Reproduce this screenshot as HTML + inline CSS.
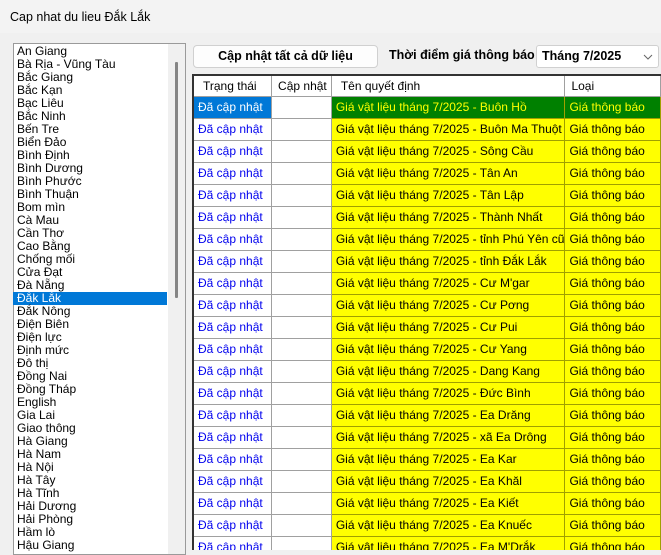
<!DOCTYPE html>
<html><head><meta charset="utf-8"><style>
*{margin:0;padding:0;box-sizing:border-box}
body{width:661px;height:553px;overflow:hidden;background:#f0f0f0;font-family:"Liberation Sans",sans-serif;font-size:12px;position:relative;color:#000}
.abs{position:absolute}
#title{left:0;top:0;width:661px;height:33px;background:#f3f3f3;}
#title span{position:absolute;left:10px;top:10px;font-size:12.5px}
#list{left:13px;top:43px;width:173px;height:512px;background:#fff;border:1px solid #9a9a9a;}
#list .it{position:absolute;left:4px;height:13px;line-height:13px;white-space:nowrap}
#sel{left:13px;top:292px;width:154px;height:13px;background:#0078d7}
#sb{left:168px;top:44px;width:17px;height:510px;background:#f0f0f0}
#thumb{left:175px;top:62px;width:3px;height:236px;background:#858585;border-radius:1px}
#btn{left:193px;top:45px;width:185px;height:23px;background:#fdfdfd;border:1px solid #d0d0d0;border-radius:4px;font-weight:bold;text-align:center;line-height:21px;font-size:12.5px}
#lbl{left:389px;top:48px;font-weight:bold;font-size:12.5px}
#combo{left:536px;top:45px;width:123px;height:23px;background:#fff;border:1px solid #d0d0d0;border-radius:3px;font-weight:bold;font-size:12.5px;line-height:21px;padding-left:5px}
#grid{left:192px;top:74px;width:469px;height:476px;background:#fff;border-left:2px solid #333;border-top:2px solid #333;overflow:hidden}
table{border-collapse:collapse;table-layout:fixed;position:absolute;left:0;top:0}
td{height:22px;border-right:1px solid #a0a0a0;border-bottom:1px solid #a0a0a0;padding-left:4px;white-space:nowrap;overflow:hidden}
tr.h td{height:20px;padding-left:9px}
td.s{color:#0000ee}
td.y{background:#ffff00;border-right-color:#a0a000;border-bottom-color:#a0a000}
tr.g td.y{background:#008000;color:#ffff00}
tr.g td.s{background:#0078d7;color:#fff}
#bot{left:192px;top:550px;width:469px;height:3px;background:#f0f0f0}
</style></head><body>
<div id="title" class="abs"><span>Cap nhat du lieu Đắk Lắk</span></div>
<div id="list" class="abs"></div>
<div id="sel" class="abs"></div>
<div id="sb" class="abs"></div>
<div id="thumb" class="abs"></div>
<div id="items"></div>
<div id="btn" class="abs">Cập nhật tất cả dữ liệu</div>
<div id="lbl" class="abs">Thời điểm giá thông báo</div>
<div id="combo" class="abs">Tháng 7/2025<svg style="position:absolute;right:5px;top:8px" width="10" height="6"><path d="M1 1L5 5L9 1" fill="none" stroke="#666" stroke-width="1"/></svg></div>
<div id="grid" class="abs">
<table>
<colgroup><col style="width:80px"><col style="width:61px"><col style="width:231px"><col style="width:100px"></colgroup>
<tr class="h"><td>Trạng thái</td><td style="padding-left:6px">Cập nhật</td><td>Tên quyết định</td><td style="padding-left:6px">Loại</td></tr>
<tr class="g"><td class="s">Đã cập nhật</td><td></td><td class="y">Giá vật liệu tháng 7/2025 - Buôn Hồ</td><td class="y">Giá thông báo</td></tr>
<tr><td class="s">Đã cập nhật</td><td></td><td class="y">Giá vật liệu tháng 7/2025 - Buôn Ma Thuột</td><td class="y">Giá thông báo</td></tr>
<tr><td class="s">Đã cập nhật</td><td></td><td class="y">Giá vật liệu tháng 7/2025 - Sông Cầu</td><td class="y">Giá thông báo</td></tr>
<tr><td class="s">Đã cập nhật</td><td></td><td class="y">Giá vật liệu tháng 7/2025 - Tân An</td><td class="y">Giá thông báo</td></tr>
<tr><td class="s">Đã cập nhật</td><td></td><td class="y">Giá vật liệu tháng 7/2025 - Tân Lập</td><td class="y">Giá thông báo</td></tr>
<tr><td class="s">Đã cập nhật</td><td></td><td class="y">Giá vật liệu tháng 7/2025 - Thành Nhất</td><td class="y">Giá thông báo</td></tr>
<tr><td class="s">Đã cập nhật</td><td></td><td class="y">Giá vật liệu tháng 7/2025 - tỉnh Phú Yên cũ</td><td class="y">Giá thông báo</td></tr>
<tr><td class="s">Đã cập nhật</td><td></td><td class="y">Giá vật liệu tháng 7/2025 - tỉnh Đắk Lắk</td><td class="y">Giá thông báo</td></tr>
<tr><td class="s">Đã cập nhật</td><td></td><td class="y">Giá vật liệu tháng 7/2025 - Cư M'gar</td><td class="y">Giá thông báo</td></tr>
<tr><td class="s">Đã cập nhật</td><td></td><td class="y">Giá vật liệu tháng 7/2025 - Cư Pơng</td><td class="y">Giá thông báo</td></tr>
<tr><td class="s">Đã cập nhật</td><td></td><td class="y">Giá vật liệu tháng 7/2025 - Cư Pui</td><td class="y">Giá thông báo</td></tr>
<tr><td class="s">Đã cập nhật</td><td></td><td class="y">Giá vật liệu tháng 7/2025 - Cư Yang</td><td class="y">Giá thông báo</td></tr>
<tr><td class="s">Đã cập nhật</td><td></td><td class="y">Giá vật liệu tháng 7/2025 - Dang Kang</td><td class="y">Giá thông báo</td></tr>
<tr><td class="s">Đã cập nhật</td><td></td><td class="y">Giá vật liệu tháng 7/2025 - Đức Bình</td><td class="y">Giá thông báo</td></tr>
<tr><td class="s">Đã cập nhật</td><td></td><td class="y">Giá vật liệu tháng 7/2025 - Ea Drăng</td><td class="y">Giá thông báo</td></tr>
<tr><td class="s">Đã cập nhật</td><td></td><td class="y">Giá vật liệu tháng 7/2025 - xã Ea Drông</td><td class="y">Giá thông báo</td></tr>
<tr><td class="s">Đã cập nhật</td><td></td><td class="y">Giá vật liệu tháng 7/2025 - Ea Kar</td><td class="y">Giá thông báo</td></tr>
<tr><td class="s">Đã cập nhật</td><td></td><td class="y">Giá vật liệu tháng 7/2025 - Ea Khăl</td><td class="y">Giá thông báo</td></tr>
<tr><td class="s">Đã cập nhật</td><td></td><td class="y">Giá vật liệu tháng 7/2025 - Ea Kiết</td><td class="y">Giá thông báo</td></tr>
<tr><td class="s">Đã cập nhật</td><td></td><td class="y">Giá vật liệu tháng 7/2025 - Ea Knuếc</td><td class="y">Giá thông báo</td></tr>
<tr><td class="s">Đã cập nhật</td><td></td><td class="y">Giá vật liệu tháng 7/2025 - Ea M'Drắk</td><td class="y">Giá thông báo</td></tr>
</table>
</div>
<div id="bot" class="abs"></div>
<div class="abs" style="left:13px;top:45px;width:154px;height:508px;overflow:hidden">
<div style="position:absolute;left:4px;top:0;line-height:13px;white-space:nowrap">
An Giang<br>Bà Rịa - Vũng Tàu<br>Bắc Giang<br>Bắc Kạn<br>Bạc Liêu<br>Bắc Ninh<br>Bến Tre<br>Biển Đảo<br>Bình Định<br>Bình Dương<br>Bình Phước<br>Bình Thuận<br>Bom mìn<br>Cà Mau<br>Cần Thơ<br>Cao Bằng<br>Chống mối<br>Cửa Đạt<br>Đà Nẵng<br><span style="color:#fff">Đắk Lắk</span><br>Đắk Nông<br>Điện Biên<br>Điện lực<br>Định mức<br>Đô thị<br>Đồng Nai<br>Đồng Tháp<br>English<br>Gia Lai<br>Giao thông<br>Hà Giang<br>Hà Nam<br>Hà Nội<br>Hà Tây<br>Hà Tĩnh<br>Hải Dương<br>Hải Phòng<br>Hầm lò<br>Hậu Giang
</div></div>
</body></html>
